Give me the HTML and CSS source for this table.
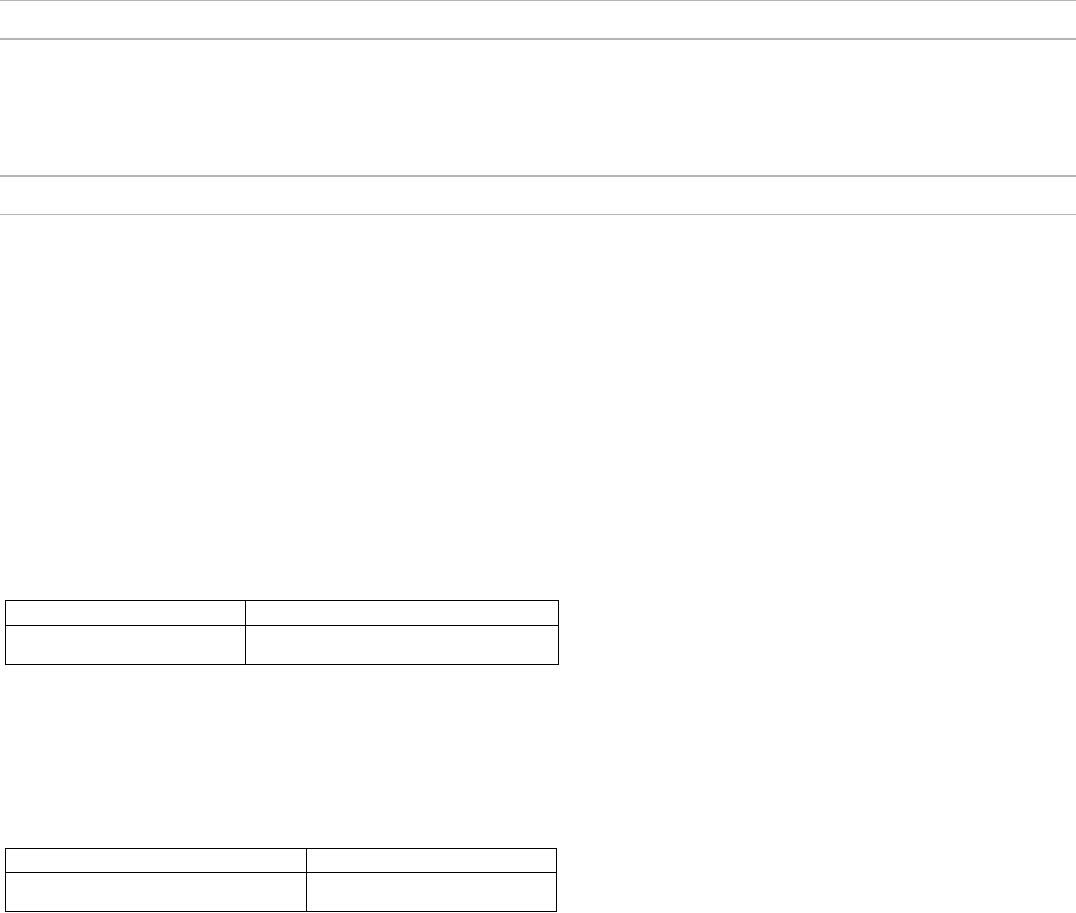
FILE: index.html
```html
<!DOCTYPE html>
<html lang="en">
<head>
  <meta charset="UTF-8" />
  <meta name="viewport" content="width=device-width, initial-scale=1.0"/>
  <title>Report</title>
  <link rel="stylesheet" href="styles.css">
</head>
<body>
  <div class="topbar"></div>
  <div class="subbar"></div>

  <div class="content">
    <table class="grid grid-first">
      <tr class="head-row"><th class="col-a"></th><th></th></tr>
      <tr class="body-row"><td></td><td></td></tr>
    </table>

    <table class="grid grid-second">
      <tr class="head-row"><th class="col-b"></th><th></th></tr>
      <tr class="body-row"><td></td><td></td></tr>
    </table>
  </div>
</body>
</html>
```

FILE: styles.css
```css
body {
  font-family: 'Liberation Sans', Arial, sans-serif;
  background: #ffffff;
  margin: 0;
  padding: 0;
}

.topbar {
  height: 37px;
  border-top: 1px solid #b4b4b4;
  border-bottom: 2px solid #b4b4b4;
}

/* second band */
.subbar {
  margin-top: 135px;
  height: 37px;
  border-top: 2px solid #b4b4b4;
  border-bottom: 1px solid #b4b4b4;
}

.content {
  padding: 0 5px;
}

.grid {
  border-collapse: collapse;
  table-layout: fixed;
}

.grid th,
.grid td {
  border: 1px solid #000;
  padding: 0;
}

.grid-first {
  width: 554px;
  margin-top: 385px;
}

.grid-second {
  width: 552px;
  margin-top: 183px;
}

.col-a {
  width: 239px;
}

.col-b {
  width: 300px;
}

.head-row {
  height: 25px;
}

.grid-second .head-row {
  height: 24px;
}

.body-row {
  height: 39px;
}
```
